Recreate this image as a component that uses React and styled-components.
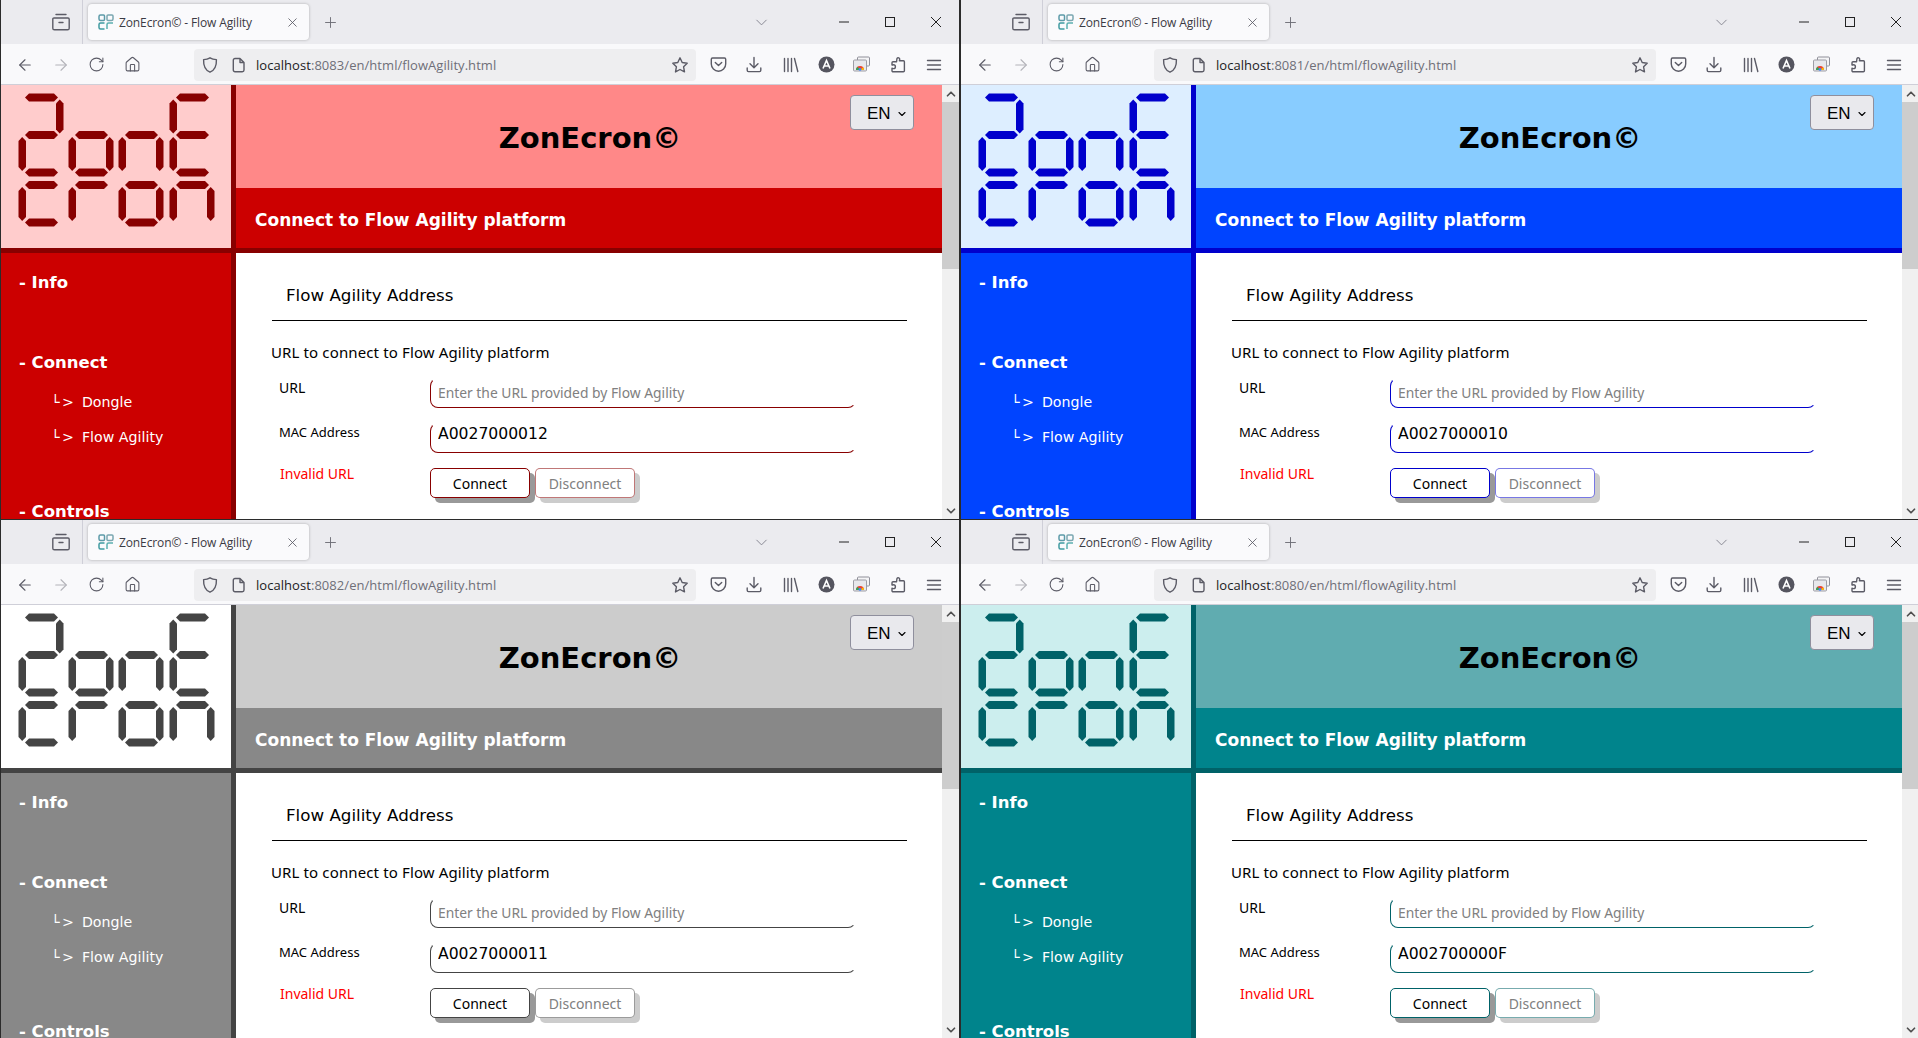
import React from "react"
import styled, { createGlobalStyle, ThemeProvider } from "styled-components"
import { ArrowLeft, ArrowRight, RotateCw, House, X, Plus, ChevronDown, ChevronUp } from "lucide-react"

const themes = {
  red: { soft: "#ffcccc", mid: "#ff8888", main: "#cc0000", dark: "#880000" },
  blue: { soft: "#ddeeff", mid: "#88ccff", main: "#0044ff", dark: "#0000cc" },
  grey: { soft: "#ffffff", mid: "#cccccc", main: "#888888", dark: "#444444" },
  teal: { soft: "#cceeee", mid: "#60acb0", main: "#00848c", dark: "#006268" },
}

const windows = [
  { id: "w1", theme: "red", port: "8083", mac: "A0027000012", edge: 1 },
  { id: "w2", theme: "blue", port: "8081", mac: "A0027000010", edge: 2 },
  { id: "w3", theme: "grey", port: "8082", mac: "A0027000011", edge: 1 },
  { id: "w4", theme: "teal", port: "8080", mac: "A002700000F", edge: 2 },
]

const GlobalStyle = createGlobalStyle`
  html, body {
    margin: 0;
    height: 100%;
    overflow: hidden;
    background: #fff;
  }
  * {
    box-sizing: border-box;
  }
`

// The right hand windows run one pixel past the edge of the screen
const Desktop = styled.div`
  width: 1918px;
  height: 1038px;
  display: grid;
  grid-template-columns: 959px 960px;
  grid-template-rows: 520px 518px;
  overflow: hidden;
  font-family: "DejaVu Sans", Verdana, sans-serif;
`

const Window = styled.section`
  display: flex;
  flex-direction: column;
  min-width: 0;
  min-height: 0;
  overflow: hidden;
  border-left: ${props => props.$edge}px solid #2b2b2b;
  border-bottom: ${props => (props.$last ? "0" : "1px solid #2b2b2b")};
`

// Browser chrome

const TabBar = styled.div`
  flex: 0 0 44px;
  display: flex;
  align-items: center;
  background: #ebebef;
  color: #5b5b66;
`

const TabsButton = styled.div`
  width: 82px;
  height: 44px;
  display: flex;
  align-items: center;
  justify-content: center;
  padding-left: 49px;
  padding-right: 11px;
  border-right: 1px solid #cfcfd8;
`

const Tab = styled.div`
  width: 221px;
  height: 36px;
  margin-left: 5px;
  padding: 0 9px 0 10px;
  display: flex;
  align-items: center;
  background: #fafafc;
  border-radius: 4px;
  box-shadow: 0 0 3px rgba(0, 0, 0, 0.28);
`

const TabTitle = styled.span`
  flex: 1;
  margin-left: 5px;
  font-family: "Open Sans", "Noto Sans", sans-serif;
  font-size: 12px;
  letter-spacing: -0.12px;
  color: #3a3a44;
  white-space: nowrap;
`

const NewTab = styled.div`
  margin-left: 13px;
  display: flex;
  color: #6b6b74;
`

const TabSpacer = styled.div`
  flex: 1;
`

const AllTabs = styled.div`
  display: flex;
  margin-right: 50px;
  color: #85858f;
`

const WinButton = styled.div`
  width: 46px;
  height: 44px;
  display: flex;
  align-items: center;
  justify-content: center;
  color: #222;
`

const Toolbar = styled.div`
  flex: 0 0 41px;
  display: flex;
  align-items: center;
  background: #f9f9fb;
  border-bottom: 1px solid #cfcfd8;
  padding-top: 1px;
  color: #5b5b66;
`

const NavGroup = styled.div`
  width: 193px;
  padding-left: 15px;
  display: flex;
  align-items: center;
  gap: 17.7px;
`

const NavIcon = styled.span`
  display: flex;
  width: 18px;
  justify-content: center;
  color: ${props => (props.$off ? "#b4b4ba" : "#5b5b66")};
`

const UrlBar = styled.div`
  width: 502px;
  height: 32px;
  display: flex;
  align-items: center;
  padding: 0 7px 0 7px;
  gap: 12px;
  background: #eeeef0;
  border-radius: 4px;
`

const UrlText = styled.div`
  flex: 1;
  font-family: "Open Sans", "Noto Sans", sans-serif;
  font-size: 13px;
  letter-spacing: 0.05px;
  color: #6f6f78;
  white-space: nowrap;
  margin-left: -3px;
`

const UrlHost = styled.span`
  color: #1c1b22;
`

const ToolIcons = styled.div`
  flex: 1;
  display: flex;
  align-items: center;
  justify-content: space-between;
  padding: 0 16px 0 14px;
`

// Page inside the browser

const Viewport = styled.div`
  flex: 1;
  min-height: 0;
  display: flex;
`

const PageArea = styled.div`
  flex: 1;
  min-width: 0;
  display: grid;
  grid-template-columns: 235px 1fr;
  grid-template-rows: 168px 1fr;
  overflow: hidden;
  background: #fff;
`

const LogoCell = styled.div`
  background: ${props => props.theme.soft};
  border-right: 5px solid ${props => props.theme.dark};
  border-bottom: 5px solid ${props => props.theme.dark};
`

const LogoSvg = styled.svg`
  display: block;
  fill: ${props => props.theme.dark};
`

const Hero = styled.header`
  display: flex;
  flex-direction: column;
  border-bottom: 5px solid ${props => props.theme.dark};
`

const TitleRow = styled.div`
  flex: 0 0 103px;
  position: relative;
  display: flex;
  align-items: center;
  justify-content: center;
  background: ${props => props.theme.mid};
`

const SiteTitle = styled.h1`
  margin: 4px 0 0 2px;
  font-size: 29px;
  line-height: 1;
  font-weight: 700;
  color: #000;
`

const LangSelect = styled.div`
  position: absolute;
  top: 10px;
  right: 28px;
  width: 64px;
  height: 35px;
  display: flex;
  align-items: center;
  padding: 3px 0 0 16px;
  gap: 5px;
  background: #e9e9ed;
  border: 1px solid #8f8f9d;
  border-radius: 4px;
  font-family: "Liberation Sans", Arial, sans-serif;
  font-size: 17px;
  color: #000;
`

const Band = styled.div`
  flex: 1;
  display: flex;
  align-items: center;
  padding: 4px 0 0 19px;
  background: ${props => props.theme.main};
  color: #fff;
  font-size: 17px;
  font-weight: 700;
`

const Sidebar = styled.nav`
  background: ${props => props.theme.main};
  border-right: 5px solid ${props => props.theme.dark};
  padding: 18px 0 0 18px;
  color: #fff;
  overflow: hidden;
`

const MenuTitle = styled.div`
  height: 24px;
  line-height: 24px;
  font-size: 16.5px;
  font-weight: 700;
  margin-top: ${props => props.$gap}px;
  white-space: nowrap;
`

const SubItem = styled.div`
  height: 24px;
  line-height: 24px;
  margin-top: ${props => props.$gap}px;
  margin-left: 32px;
  font-size: 14.2px;
  white-space: nowrap;
`

const SubMark = styled.span`
  letter-spacing: 2.5px;
  margin-right: 1px;
`

const Content = styled.main`
  padding: 0 35px;
  overflow: hidden;
  font-family: "Noto Sans", "DejaVu Sans", sans-serif;
  color: #000;
`

const SectionHead = styled.h2`
  width: 635px;
  height: 68px;
  margin: 0 0 0 1px;
  padding: 30px 0 0 14px;
  border-bottom: 1px solid #000;
  font-family: "DejaVu Sans", Verdana, sans-serif;
  font-size: 16.7px;
  line-height: 24px;
  font-weight: 400;
`

const Intro = styled.p`
  margin: 20px 0 15px 0;
  font-size: 15px;
  line-height: 22px;
  letter-spacing: 0.13px;
`

const FormRow = styled.div`
  display: grid;
  grid-template-columns: 159px 426px;
  height: 30px;
  margin-bottom: 15px;
`

const FieldLabel = styled.label`
  padding-left: ${props => (props.$error ? 9 : 8)}px;
  margin-top: ${props => props.$shift || 0}px;
  font-size: ${props => props.$size || 14}px;
  line-height: 20px;
  color: ${props => (props.$error ? "#ff0000" : "#000")};
`

const TextField = styled.input`
  width: 426px;
  height: 30px;
  padding: 0 7px ${props => (props.$filled ? 9 : 0)}px 7px;
  background: #fff;
  border: 1px solid ${props => props.theme.dark};
  border-top-color: transparent;
  border-right-color: transparent;
  border-radius: 8px;
  outline: none;
  font-family: "DejaVu Sans", Verdana, sans-serif;
  font-size: 15.6px;
  color: #000;

  &::placeholder {
    font-family: "Noto Sans", sans-serif;
    font-size: 13.85px;
    color: #808080;
    opacity: 1;
  }
`

const Buttons = styled.div`
  display: flex;
  gap: 5px;
`

const ActionButton = styled.button`
  width: 100px;
  height: 30px;
  padding: 0;
  background: #fff;
  border: 1px solid ${props => props.theme.dark};
  border-radius: 5px;
  box-shadow: 5px 5px 0 #999;
  font-family: "Noto Sans", sans-serif;
  font-size: 14px;
  color: #000;

  &:disabled {
    border-color: ${props => props.theme.dark}88;
    box-shadow: 5px 5px 0 #cccccc;
    color: #808080;
  }
`

const Scrollbar = styled.div`
  flex: 0 0 17px;
  display: flex;
  flex-direction: column;
  background: #f0f0f0;
  color: #505050;
`

const ScrollArrow = styled.div`
  height: 17px;
  display: flex;
  align-items: center;
  justify-content: center;
`

const ScrollThumb = styled.div`
  height: 167px;
  background: #cdcdcd;
`

const ScrollTrack = styled.div`
  flex: 1;
`

// Drawings

const Glyph = ({ size = 18, children, box = 18 }) => (
  <svg width={size} height={size} viewBox={`0 0 ${box} ${box}`} fill="none" stroke="currentColor" strokeWidth="1.4" strokeLinecap="round" strokeLinejoin="round">
    {children}
  </svg>
)

const TabsIcon = () => (
  <Glyph size={20} box={20}>
    <path d="M5 2.5h10M3 6h14a1.2 1.2 0 0 1 1.2 1.2v9a1.6 1.6 0 0 1-1.6 1.6H3.4a1.6 1.6 0 0 1-1.6-1.6v-9A1.2 1.2 0 0 1 3 6zM8 10.5h4" />
  </Glyph>
)

const Favicon = () => (
  <svg width="16" height="16" viewBox="0 0 16 16" fill="none" strokeWidth="1.5">
    <path d="M1 2.5a1.5 1.5 0 0 1 1.5-1.5H5.5a1 1 0 0 1 1 1v3.5a1 1 0 0 1-1 1H2.5A1.5 1.5 0 0 1 1 5z" stroke="#5c9aa8" />
    <path d="M9 2a1 1 0 0 1 1-1h4a1 1 0 0 1 1 1v3a1.5 1.5 0 0 1-1.5 1.5H10a1 1 0 0 1-1-1z" stroke="#7aa7b0" />
    <path d="M6.5 9H2.5A1.5 1.5 0 0 0 1 10.5v3a1.5 1.5 0 0 0 1.5 1.5h4" stroke="#3f9aa0" />
    <path d="M9 15v-4.5A1.5 1.5 0 0 1 10.5 9H15" stroke="#5cb0b0" />
  </svg>
)

const MinIcon = () => (
  <svg width="12" height="12" viewBox="0 0 12 12"><path d="M1 6h10" stroke="currentColor" /></svg>
)
const MaxIcon = () => (
  <svg width="12" height="12" viewBox="0 0 12 12" fill="none"><rect x="1.5" y="1.5" width="9" height="9" stroke="currentColor" /></svg>
)
const CloseIcon = () => (
  <svg width="12" height="12" viewBox="0 0 12 12"><path d="M1 1l10 10M11 1L1 11" stroke="currentColor" /></svg>
)

const ShieldIcon = () => (
  <Glyph>
    <path d="M9 1.8c2 1.3 4 1.7 6.4 1.8.3 6.3-1.5 10.5-6.4 12.6C4.1 14.100 2.300 9.900 2.600 3.600 5 3.500 7 3.100 9 1.800z" />
  </Glyph>
)

const DocIcon = () => (
  <Glyph size={16} box={16}>
    <path d="M4 1.500h5l4 4v7.500a1.700 1.700 0 0 1-1.700 1.700H4A1.700 1.700 0 0 1 2.300 13V3.200A1.700 1.700 0 0 1 4 1.500zM9 1.500v4h4" />
  </Glyph>
)

const StarIcon = () => (
  <Glyph>
    <path d="M9 1.800l2.200 4.700 5 .7-3.600 3.600.9 5.100L9 13.500l-4.500 2.400.9-5.100L1.800 7.200l5-.7z" />
  </Glyph>
)

const PocketIcon = () => (
  <Glyph size={17} box={17}>
    <path d="M2.500 2h12A1.200 1.200 0 0 1 15.700 3.200V8a7.200 7.200 0 0 1-14.400 0V3.200A1.200 1.200 0 0 1 2.500 2zM5.300 6.500l3.200 3.100 3.200-3.100" />
  </Glyph>
)

const DownloadIcon = () => (
  <Glyph>
    <path d="M9 1.500v10M5 7.800l4 4 4-4M2.200 12v2.300a1.300 1.300 0 0 0 1.300 1.300h11a1.300 1.300 0 0 0 1.300-1.300V12" />
  </Glyph>
)

const LibraryIcon = () => (
  <Glyph>
    <path d="M2.500 2.500v13M6 2.500v13M9.500 2.500v13M12.500 2.500l3.300 13" />
  </Glyph>
)

const AvatarIcon = () => (
  <svg width="17" height="17" viewBox="0 0 17 17">
    <circle cx="8.500" cy="8.500" r="8" fill="#55555f" />
    <path d="M5 12.500L8.500 4.500 12 12.500M6.200 10h4.600" stroke="#fff" strokeWidth="1.600" fill="none" />
  </svg>
)

const ChromeStackIcon = () => (
  <svg width="17" height="17" viewBox="0 0 17 17" fill="none">
    <rect x="4.500" y="1" width="12" height="9" rx="1" stroke="#8f8f98" fill="#f4f4f6" />
    <rect x="0.500" y="4" width="13" height="11" rx="1" stroke="#9d9da5" fill="#e8e8ec" />
    <path d="M3 14a4 4 0 0 1 8 0z" fill="#ea4335" />
    <path d="M3 14a4 4 0 0 1 1.600-3.200L7 14z" fill="#34a853" />
    <path d="M11 14a4 4 0 0 0-1-2.700L7 14z" fill="#fbbc05" />
    <circle cx="7" cy="13.400" r="1.400" fill="#4285f4" />
  </svg>
)

const ExtensionIcon = () => (
  <Glyph>
    <path d="M8 2.300a1.500 1.500 0 0 1 2.700 1c0 .7-.3 1-.3 1.500h4a1 1 0 0 1 1 1v9a1 1 0 0 1-1 1H4a1 1 0 0 1-1-1v-2.500c.5 0 .8.300 1.500.300a1.900 1.900 0 0 0 0-3.800c-.7 0-1 .300-1.500.300V6.800a1 1 0 0 1 1-1h3.500c.400-.700 0-1.500.500-3.500z" />
  </Glyph>
)

const HamburgerIcon = () => (
  <Glyph>
    <path d="M2.500 4.500h13M2.500 9h13M2.500 13.500h13" />
  </Glyph>
)

// Seven segment logo: every digit is a list of lit segments

const hSeg = (x, y) => `${x},${y + 4} ${x + 4},${y} ${x + 29},${y} ${x + 33},${y + 4} ${x + 29},${y + 8} ${x + 4},${y + 8}`
const vSeg = (x, y, h) => `${x},${y + 4} ${x + 3.700},${y} ${x + 7.500},${y + 4} ${x + 7.500},${y + h - 4} ${x + 3.700},${y + h} ${x},${y + h - 4}`

const digits = [0, 50, 100, 151]
const rowY = { a: 8.500, b: 46, c: 83.500, d: 96, e: 133.500 }

const logoDigits = [
  { d: 0, h: ["a", "b", "c"], v: [[37.500, 14.500], [0, 52]] },
  { d: 1, h: ["b", "c"], v: [[0, 52], [37.500, 52]] },
  { d: 2, h: ["b"], v: [[0, 52], [37.500, 52]] },
  { d: 3, h: ["a", "b", "c"], v: [[0, 14.500], [0, 52]] },
  { d: 0, h: ["d", "e"], v: [[0, 102]] },
  { d: 1, h: ["d"], v: [[0, 102]] },
  { d: 2, h: ["d", "e"], v: [[0, 102], [37.500, 102]] },
  { d: 3, h: ["d"], v: [[0, 102], [37.500, 102]] },
]

const Logo = () => (
  <LogoSvg width="230" height="163" viewBox="0 0 230 163">
    {logoDigits.map((item, i) => (
      <g key={i} transform={`translate(${digits[item.d]} 0)`}>
        {item.h.map(r => (
          <polygon key={r} points={hSeg(24, rowY[r])} />
        ))}
        {item.v.map(([x, y]) => (
          <polygon key={`${x}-${y}`} points={vSeg(17.500 + x, y, 34)} />
        ))}
      </g>
    ))}
  </LogoSvg>
)

const BrowserWindow = ({ win, last }) => (
  <ThemeProvider theme={themes[win.theme]}>
    <Window $edge={win.edge} $last={last}>
      <TabBar>
        <TabsButton><TabsIcon /></TabsButton>
        <Tab>
          <Favicon />
          <TabTitle>ZonEcron© - Flow Agility</TabTitle>
          <X size={15} strokeWidth={1.3} color="#55555f" />
        </Tab>
        <NewTab><Plus size={17} strokeWidth={1.3} /></NewTab>
        <TabSpacer />
        <AllTabs><ChevronDown size={19} strokeWidth={1.2} /></AllTabs>
        <WinButton><MinIcon /></WinButton>
        <WinButton><MaxIcon /></WinButton>
        <WinButton><CloseIcon /></WinButton>
      </TabBar>
      <Toolbar>
        <NavGroup>
          <NavIcon><ArrowLeft size={18} strokeWidth={1.5} /></NavIcon>
          <NavIcon $off><ArrowRight size={18} strokeWidth={1.5} /></NavIcon>
          <NavIcon><RotateCw size={17} strokeWidth={1.5} /></NavIcon>
          <NavIcon><House size={17} strokeWidth={1.5} /></NavIcon>
        </NavGroup>
        <UrlBar>
          <ShieldIcon />
          <DocIcon />
          <UrlText><UrlHost>localhost</UrlHost>:{win.port}/en/html/flowAgility.html</UrlText>
          <StarIcon />
        </UrlBar>
        <ToolIcons>
          <PocketIcon />
          <DownloadIcon />
          <LibraryIcon />
          <AvatarIcon />
          <ChromeStackIcon />
          <ExtensionIcon />
          <HamburgerIcon />
        </ToolIcons>
      </Toolbar>
      <Viewport>
        <PageArea>
          <LogoCell><Logo /></LogoCell>
          <Hero>
            <TitleRow>
              <SiteTitle>ZonEcron©</SiteTitle>
              <LangSelect>EN <ChevronDown size={12} strokeWidth={2.2} /></LangSelect>
            </TitleRow>
            <Band>Connect to Flow Agility platform</Band>
          </Hero>
          <Sidebar>
            <MenuTitle>- Info</MenuTitle>
            <MenuTitle $gap={56}>- Connect</MenuTitle>
            <SubItem $gap={15}><SubMark>└&gt;</SubMark> Dongle</SubItem>
            <SubItem $gap={11}><SubMark>└&gt;</SubMark> Flow Agility</SubItem>
            <MenuTitle $gap={51}>- Controls</MenuTitle>
          </Sidebar>
          <Content>
            <SectionHead>Flow Agility Address</SectionHead>
            <Intro>URL to connect to Flow Agility platform</Intro>
            <FormRow>
              <FieldLabel>URL</FieldLabel>
              <TextField placeholder="Enter the URL provided by Flow Agility" readOnly />
            </FormRow>
            <FormRow>
              <FieldLabel $size={13} $shift={-1}>MAC Address</FieldLabel>
              <TextField $filled value={win.mac} readOnly />
            </FormRow>
            <FormRow>
              <FieldLabel $error $shift={-4}>Invalid URL</FieldLabel>
              <Buttons>
                <ActionButton>Connect</ActionButton>
                <ActionButton disabled>Disconnect</ActionButton>
              </Buttons>
            </FormRow>
          </Content>
        </PageArea>
        <Scrollbar>
          <ScrollArrow><ChevronUp size={14} strokeWidth={3} /></ScrollArrow>
          <ScrollThumb />
          <ScrollTrack />
          <ScrollArrow><ChevronDown size={14} strokeWidth={3} /></ScrollArrow>
        </Scrollbar>
      </Viewport>
    </Window>
  </ThemeProvider>
)

export default function App() {
  return (
    <>
      <GlobalStyle />
      <Desktop>
        {windows.map((win, i) => (
          <BrowserWindow key={win.id} win={win} last={i > 1} />
        ))}
      </Desktop>
    </>
  )
}
